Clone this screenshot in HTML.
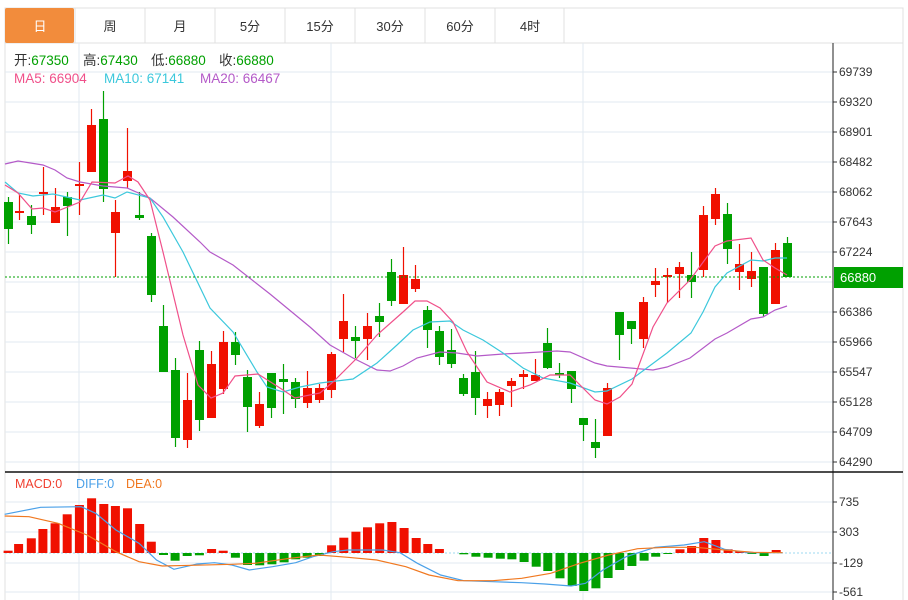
<!DOCTYPE html>
<html><head><meta charset="utf-8"><style>
body{margin:0;background:#fff;width:908px;height:600px;overflow:hidden;font-family:"Liberation Sans","Noto Sans CJK SC",sans-serif;}
svg{position:absolute;left:0;top:0}
</style></head><body>
<svg id="s" width="908" height="600" xmlns="http://www.w3.org/2000/svg" font-family="Liberation Sans, Noto Sans CJK SC, sans-serif"></svg>
<script>
const S=document.getElementById('s');let h='';
const R='#f01000',G='#00a000',GR='#e2eaf1';
h+=`<rect x="5" y="8" width="898" height="35" fill="#fff" stroke="#e0e0e0"/>`;
const tabs=['日','周','月','5分','15分','30分','60分','4时'];
tabs.forEach((t,i)=>{const x=5+i*70;
 if(i==0)h+=`<rect x="5" y="8" width="69" height="35" rx="2" fill="#f28c3c"/>`;
 else h+=`<line x1="${x}" y1="8" x2="${x}" y2="43" stroke="#e0e0e0"/>`;
 h+=`<text x="${x+35}" y="31" font-size="13" text-anchor="middle" fill="${i?'#333':'#fff'}">${t}</text>`;});
h+=`<line x1="564" y1="8" x2="564" y2="43" stroke="#e0e0e0"/>`;
h+=`<line x1="5" y1="43" x2="5" y2="600" stroke="#e0e0e0"/><line x1="903" y1="43" x2="903" y2="600" stroke="#e0e0e0"/>`;
const labs=['69739','69320','68901','68482','68062','67643','67224','','66386','65966','65547','65128','64709','64290'];
labs.forEach((l,i)=>{const y=72+i*30;h+=`<line x1="5" y1="${y}" x2="833" y2="${y}" stroke="${GR}"/>`;
 if(l)h+=`<line x1="833" y1="${y}" x2="837" y2="${y}" stroke="#333"/><text x="839" y="${y+4}" font-size="12" fill="#333">${l}</text>`;});
[502,532,563,592].forEach(y=>h+=`<line x1="5" y1="${y}" x2="833" y2="${y}" stroke="${GR}"/>`);
[['735',502],['303',532],['-129',563],['-561',592]].forEach(a=>h+=`<line x1="833" y1="${a[1]}" x2="837" y2="${a[1]}" stroke="#333"/><text x="839" y="${a[1]+4}" font-size="12" fill="#333">${a[0]}</text>`);
[79,331,583].forEach(x=>h+=`<line x1="${x}" y1="43" x2="${x}" y2="600" stroke="${GR}"/>`);
const C=[[8,197,202,229,244,G],[19,195,211,213,220,R],[31,205,216,225,234,G],[43,167,192,194,215,R],[55,188,207,223,223,R],[67,192,197,206,236,G],[79,162,184,186,215,R],[91,109,125,172,172,R],[103,91,119,189,202,G],[115,200,212,233,277,R],[127,128,171,181,188,R],[139,192,215,218,220,G],[151,233,236,295,302,G],[163,305,326,372,372,G],[175,358,370,438,447,G],[187,373,400,440,448,R],[199,341,350,420,431,G],[211,351,364,418,418,R],[223,331,342,389,394,R],[235,332,342,355,365,G],[247,370,377,407,432,G],[259,392,404,426,428,R],[271,373,373,408,418,G],[283,364,379,382,414,G],[295,378,382,399,408,G],[307,371,388,403,408,R],[319,384,388,400,403,R],[331,352,354,390,398,R],[343,294,321,339,352,R],[355,326,337,341,358,G],[367,313,326,339,360,R],[379,303,316,322,337,G],[391,259,272,301,306,G],[403,247,275,304,304,R],[415,265,279,289,292,R],[427,306,310,330,348,G],[439,326,331,357,365,G],[451,329,350,364,368,G],[463,374,378,394,396,G],[475,351,372,398,415,G],[487,392,399,406,418,R],[499,389,392,405,416,R],[511,378,381,386,407,R],[523,370,374,377,389,R],[535,359,375,381,381,R],[547,328,343,368,369,G],[559,363,373,374,378,G],[571,371,371,389,403,G],[583,418,418,425,441,G],[595,419,442,448,458,G],[607,383,388,436,436,R],[619,312,312,335,360,G],[631,321,321,329,344,G],[643,297,302,339,348,R],[655,268,281,285,297,R],[667,268,275,277,303,R],[679,262,267,274,298,R],[691,252,275,282,298,G],[703,206,215,270,277,R],[715,188,194,219,225,R],[727,203,214,249,264,G],[739,244,264,272,290,R],[751,252,271,279,287,R],[763,267,267,314,317,G],[775,243,250,304,304,R],[787,237,243,277,277,G]];
C.forEach(c=>{h+=`<line x1="${c[0]+.5}" y1="${c[1]}" x2="${c[0]+.5}" y2="${c[4]}" stroke="${c[5]}" stroke-width="1.2"/><rect x="${c[0]-4}" y="${c[2]}" width="9" height="${Math.max(1.5,c[3]-c[2])}" fill="${c[5]}"/>`;});
const pl=(p,col)=>`<polyline points="${p.map(a=>a.join(',')).join(' ')}" fill="none" stroke="${col}" stroke-width="1.2"/>`;
h+=pl([[5,164],[18,161],[43,165],[55,170],[67,178],[80,182],[103,186],[127,188],[150,198],[173,217],[200,242],[210,252],[233,265],[270,294],[310,327],[330,345],[353,358],[377,370],[390,371],[403,366],[417,358],[440,352],[457,353],[477,356],[503,354],[523,353],[557,351],[570,352],[595,363],[607,366],[653,370],[667,367],[690,358],[715,339],[727,333],[751,319],[763,317],[775,310],[787,306]],'#b45ac8');
h+=pl([[5,182],[18,193],[33,196],[53,194],[80,200],[103,195],[115,198],[127,192],[150,198],[163,217],[183,252],[210,308],[233,332],[257,372],[267,387],[283,392],[300,387],[320,383],[353,379],[377,363],[397,345],[413,330],[430,322],[450,321],[463,330],[483,340],[503,353],[523,368],[543,378],[570,383],[595,392],[607,391],[632,379],[667,353],[691,333],[703,312],[715,287],[727,273],[751,260],[763,261],[775,258],[787,258]],'#3cc8dc');
h+=pl([[5,185],[18,193],[32,209],[43,208],[55,212],[80,202],[92,182],[115,183],[128,176],[138,182],[150,200],[163,252],[183,335],[198,385],[211,398],[223,393],[235,376],[258,374],[280,388],[295,398],[320,393],[333,382],[357,358],[377,335],[403,312],[415,301],[427,301],[440,308],[453,322],[467,352],[487,382],[510,392],[530,385],[550,375],[570,375],[595,400],[607,404],[620,397],[632,384],[653,327],[667,303],[690,280],[715,246],[727,241],[751,238],[763,260],[775,268],[787,275]],'#f0508a');
h+=`<line x1="5" y1="277" x2="833" y2="277" stroke="${G}" stroke-dasharray="2,2"/><rect x="834" y="267" width="69" height="21" fill="${G}"/><text x="840" y="282" font-size="13" fill="#fff">66880</text>`;
h+=`<line x1="833" y1="43" x2="833" y2="600" stroke="#222"/><line x1="5" y1="472" x2="903" y2="472" stroke="#111" stroke-width="1.5"/>`;
[['开',14,'67350'],['高',83,'67430'],['低',151,'66880'],['收',219,'66880']].forEach(a=>h+=`<text x="${a[1]}" y="65" font-size="13.5" fill="#333">${a[0]}:<tspan fill="${G}">${a[2]}</tspan></text>`);
[['MA5: 66904',14,'#f0508a'],['MA10: 67141',104,'#3cc8dc'],['MA20: 66467',200,'#b45ac8']].forEach(a=>h+=`<text x="${a[1]}" y="83" font-size="13.5" fill="${a[2]}">${a[0]}</text>`);
[['MACD:0',15,'#f04030'],['DIFF:0',76,'#4aa0e8'],['DEA:0',126,'#f07820']].forEach(a=>h+=`<text x="${a[1]}" y="488" font-size="12.5" fill="${a[2]}">${a[0]}</text>`);
const zx=x=>x/1.725, zy=y=>460+y/3;
h+=`<line x1="5" y1="553" x2="833" y2="553" stroke="#9cd8f0" stroke-dasharray="2,2"/>`;
const B=[[14,272],[32,252],[54,235],[74,207],[95,190],[116,163],[137,135],[158,115],[179,132],[199,138],[220,145],[241,192],[261,245],[282,285],[302,302],[323,288],[344,286],[365,267],[385,272],[406,293],[427,315],[448,316],[469,313],[490,307],[510,298],[530,293],[551,288],[572,256],[593,233],[614,215],[634,202],[655,190],[676,186],[697,204],[718,234],[738,252],[758,267],[800,283],[821,290],[842,293],[863,296],[883,298],[904,306],[925,320],[945,333],[966,355],[987,378],[1007,393],[1028,385],[1049,354],[1069,330],[1090,318],[1111,302],[1131,290],[1152,281],[1173,268],[1193,258],[1214,234],[1235,240],[1256,268],[1276,274],[1297,281],[1318,288],[1339,270]];
B.forEach(b=>{const x=zx(b[0]),y=zy(b[1]),z=553;const col=b[1]<278?R:G;h+=`<rect x="${(x-4.5).toFixed(1)}" y="${Math.min(y,z).toFixed(1)}" width="9" height="${Math.max(1,Math.abs(y-z)).toFixed(1)}" fill="${col}"/>`;});
const mp=(p,col)=>`<polyline points="${p.map(a=>zx(a[0]).toFixed(1)+','+zy(a[1]).toFixed(1)).join(' ')}" fill="none" stroke="${col}" stroke-width="1.2"/>`;
h+=mp([[8,163],[70,142],[140,140],[165,160],[200,210],[240,250],[270,300],[300,328],[340,312],[370,308],[400,315],[430,330],[470,320],[510,308],[540,290],[575,275],[600,270],[660,270],[690,278],[720,310],[760,345],[800,362],[850,365],[900,368],[940,372],[985,378],[1010,370],[1040,330],[1080,290],[1130,262],[1180,255],[1215,245],[1250,268],[1290,278],[1350,278]],'#4aa0e8');
h+=mp([[8,168],[50,170],[100,190],[150,225],[200,275],[240,305],[280,318],[330,316],[400,313],[440,310],[500,295],[550,285],[600,292],[650,300],[700,320],[740,345],[790,362],[850,362],[900,355],[950,340],[1000,310],[1050,285],[1100,266],[1150,262],[1200,262],[1250,270],[1300,277],[1350,278]],'#f07820');
S.innerHTML=h;
</script>
</body></html>
